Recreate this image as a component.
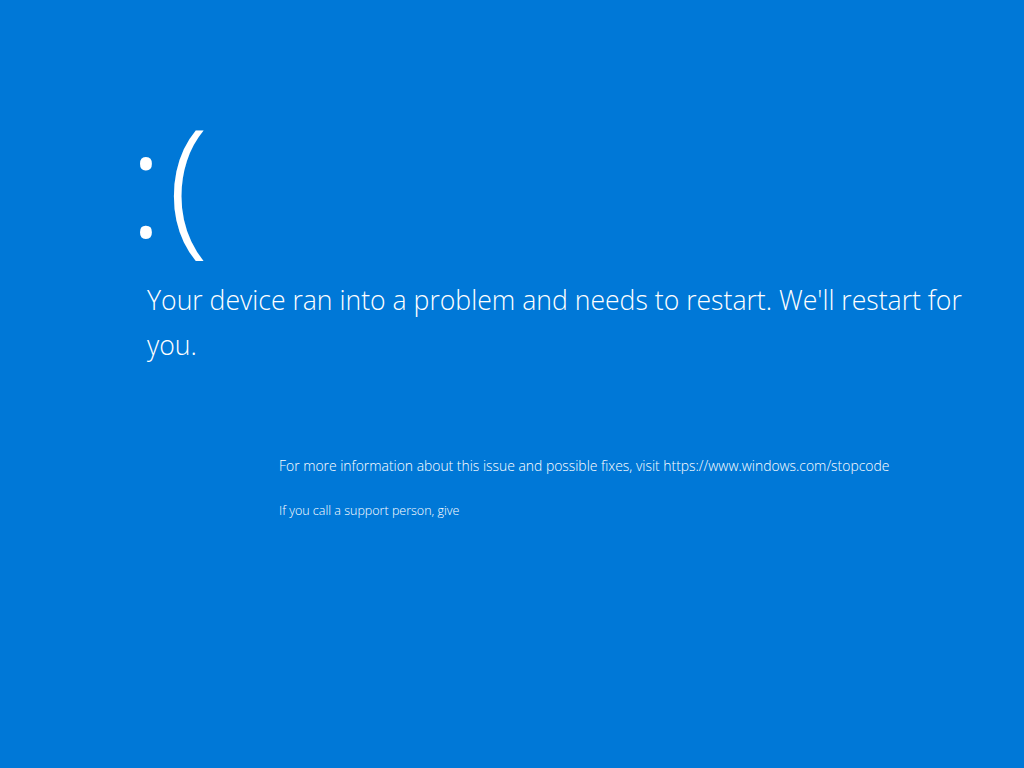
export default function App() {
  return (
    <div
      className="w-[1024px] h-[768px] bg-[#0078d7] text-white overflow-hidden"
      style={{ fontFamily: '"Open Sans", "Noto Sans", sans-serif' }}
    >
      <div className="pl-[137px] pt-[104px]">
        {/* sad face */}
        <div className="-ml-[9px] text-[150px] leading-[150px] font-light tracking-[4px]">:(</div>

        <div className="pl-[10px] mt-[24px] w-[840px]">
          <p className="text-[26.6px] leading-[45px] font-light">
            Your device ran into a problem and needs to restart. We'll restart for you.
          </p>
        </div>

        <div className="pl-[142px] mt-[88px] font-light">
          <p className="leading-[20px] text-[13.9px]">
            For more information about this issue and possible fixes, visit https://www.windows.com/stopcode
          </p>
          <p className="leading-[20px] mt-[25px] whitespace-nowrap text-[12.5px]">
            If you call a support person, give
          </p>
        </div>
      </div>
    </div>
  );
}
